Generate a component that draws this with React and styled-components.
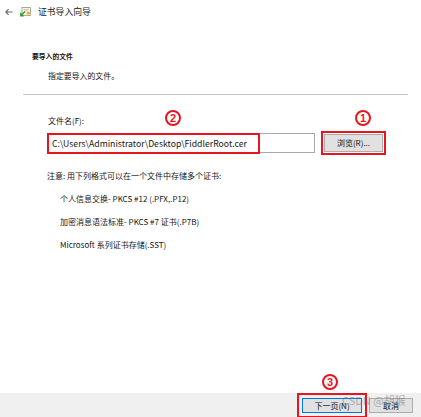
import React from "react";
import styled, { createGlobalStyle } from "styled-components";

const GlobalStyle = createGlobalStyle`
  html, body {
    margin: 0;
    padding: 0;
    background: #ffffff;
  }
  body {
    font-family: "Noto Sans CJK SC", "Noto Sans", sans-serif;
    color: #151515;
  }
`;

const Page = styled.div`
  position: relative;
  width: 421px;
  height: 417px;
  display: flex;
  flex-direction: column;
  overflow: hidden;
  background: #fff;
`;

const Header = styled.div`
  height: 24px;
  display: flex;
  align-items: center;
  padding-left: 4px;
  gap: 6px;
`;

const Title = styled.span`
  font-size: 8.8px;
  line-height: 12px;
  color: #222;
  margin-left: 1px;
`;

const Intro = styled.div`
  margin-top: 26px;
  padding-left: 32px;
  display: flex;
  flex-direction: column;
  gap: 8px;
`;

const Heading = styled.div`
  font-size: 6.8px;
  font-weight: 700;
  line-height: 12px;
`;

const SubHeading = styled.div`
  font-size: 7.9px;
  line-height: 12px;
  padding-left: 16px;
`;

const Separator = styled.hr`
  margin: 12px 13px 0 23px;
  border: none;
  border-top: 1px solid #c8c8c8;
  height: 0;
`;

const Body = styled.div`
  padding-left: 47px;
  display: flex;
  flex-direction: column;
`;

const Label = styled.div`
  margin-top: 20px;
  padding-left: 1px;
  font-size: 8px;
  line-height: 12px;
`;

const FieldRow = styled.div`
  margin-top: 6px;
  display: flex;
  align-items: center;
  gap: 9px;
  height: 20px;
`;

const Input = styled.div`
  position: relative;
  box-sizing: border-box;
  width: 268px;
  height: 20px;
  border: 1px solid #a9a9a9;
  display: flex;
  align-items: center;
  padding-left: 4px;
  font-size: 8.7px;
  white-space: nowrap;
`;

const Mark = styled.div`
  position: absolute;
  left: -1px;
  top: -1px;
  width: ${(p) => p.$w}px;
  height: ${(p) => p.$h}px;
  box-sizing: border-box;
  border: 2px solid #e8141f;
  pointer-events: none;
`;

const Button = styled.button`
  box-sizing: border-box;
  width: ${(p) => p.$w}px;
  height: ${(p) => p.$h || 18}px;
  padding: 0;
  background: #e1e1e1;
  border: 1px solid ${(p) => (p.$primary ? "#0078d7" : "#adadad")};
  font-family: inherit;
  font-size: 8px;
  line-height: 1;
  color: #111;
  outline: ${(p) => (p.$marked ? "2px solid #e8141f" : "none")};
  outline-offset: ${(p) => p.$offset || 0}px;
`;

const Notes = styled.div`
  margin-top: 17px;
  display: flex;
  flex-direction: column;
  gap: 11px;
`;

const Note = styled.div`
  font-size: 8px;
  line-height: 12px;
  padding-left: ${(p) => (p.$indent ? 13 : 0)}px;
  white-space: nowrap;
`;

const Footer = styled.div`
  margin-top: auto;
  height: 24px;
  background: #f0f0f0;
  display: flex;
  justify-content: flex-end;
  align-items: flex-start;
  padding: 5px 8px 0 0;
  box-sizing: border-box;
  gap: 7px;
`;

const Badge = styled.div`
  position: absolute;
  left: ${(p) => p.$x - 8}px;
  top: ${(p) => p.$y - 8}px;
  width: 16px;
  height: 16px;
  box-sizing: border-box;
  border: 2px solid #e8141f;
  border-radius: 50%;
  color: #e8141f;
  font-family: "Liberation Sans", Arial, sans-serif;
  font-weight: 700;
  font-size: 11px;
  line-height: 12px;
  text-align: center;
`;

const Watermark = styled.div`
  position: absolute;
  left: 342px;
  top: 393px;
  font-size: 11px;
  line-height: 14px;
  color: rgba(110, 110, 110, 0.5);
  white-space: nowrap;
  pointer-events: none;
`;

const BackArrow = () => (
  <svg width="10" height="10" viewBox="0 0 10 10">
    <path d="M8.5 5H1.8M4.6 2.2L1.8 5l2.8 2.8" fill="none" stroke="#666" strokeWidth="1.1" />
  </svg>
);

const CertIcon = () => (
  <svg width="11" height="11" viewBox="0 0 11 11">
    <rect x="2" y="0.5" width="8.5" height="8" fill="#f7f4e6" stroke="#9a9a86" strokeWidth="0.8" />
    <path d="M4 2.5h5M4 4h4" stroke="#b9b49a" strokeWidth="0.6" />
    <circle cx="8.3" cy="6.2" r="1.6" fill="#f0b429" />
    <path d="M5 4.5L1.8 7.7M0.8 5.8v2.9h2.9" fill="none" stroke="#2f9e2f" strokeWidth="1.4" />
  </svg>
);

const App = () => {
  return (
    <Page>
      <GlobalStyle />
      <Header>
        <BackArrow />
        <CertIcon />
        <Title>证书导入向导</Title>
      </Header>

      <Intro>
        <Heading>要导入的文件</Heading>
        <SubHeading>指定要导入的文件。</SubHeading>
      </Intro>
      <Separator />

      <Body>
        <Label>文件名(F):</Label>
        <FieldRow>
          <Input>
            C:\Users\Administrator\Desktop\FiddlerRoot.cer
            <Mark $w={213} $h={21} />
          </Input>
          <Button $w={59} $marked $offset={1}>浏览(R)...</Button>
        </FieldRow>

        <Notes>
          <Note>注意: 用下列格式可以在一个文件中存储多个证书:</Note>
          <Note $indent>个人信息交换- PKCS #12 (.PFX,.P12)</Note>
          <Note $indent>加密消息语法标准- PKCS #7 证书(.P7B)</Note>
          <Note $indent>Microsoft 系列证书存储(.SST)</Note>
        </Notes>
      </Body>

      <Footer>
        <Button $w={60} $h={15} $primary $marked $offset={3}>下一页(N)</Button>
        <Button $w={44} $h={15}>取消</Button>
      </Footer>

      <Badge $x={173} $y={118}>2</Badge>
      <Badge $x={363} $y={118}>1</Badge>
      <Badge $x={330} $y={382}>3</Badge>
      <Watermark>CSDN @胡猴</Watermark>
    </Page>
  );
};

export default App;
